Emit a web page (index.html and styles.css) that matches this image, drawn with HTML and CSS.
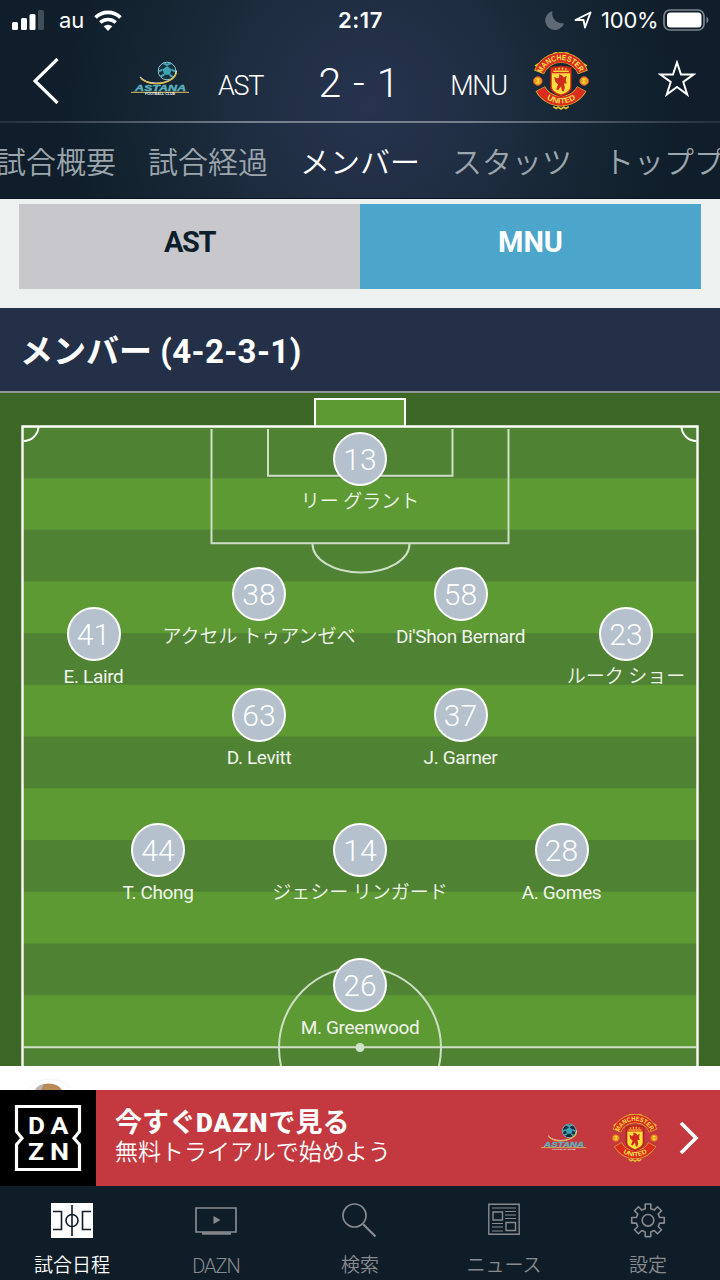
FILE: index.html
```html
<!DOCTYPE html>
<html lang="ja">
<head>
  <meta charset="UTF-8">
  <title>AST 2 - 1 MNU</title>
  <meta name="viewport" content="width=device-width, initial-scale=1.0">
  <link rel="stylesheet" href="styles.css">
</head>
<body>

  <header class="top">
    <div class="status">
      <div class="status-left">
        <svg width="32" height="20" viewBox="0 0 32 20">
          <rect x="0" y="12" width="6" height="8" rx="1.500" fill="#fff"/>
          <rect x="9" y="8" width="6" height="12" rx="1.500" fill="#fff"/>
          <rect x="17.500" y="4" width="6" height="16" rx="1.500" fill="#fff"/>
          <rect x="26" y="0" width="6" height="20" rx="1.500" fill="#414e58"/>
        </svg>
        <span class="carrier">au</span>
        <svg width="28" height="21" viewBox="0 0 28 21">
          <path d="M1.500 7.500a18 18 0 0 1 25 0" fill="none" stroke="#fff" stroke-width="3.800"/>
          <path d="M6.300 12.500a11.500 11.500 0 0 1 15.400 0" fill="none" stroke="#fff" stroke-width="3.500"/>
          <path d="M14 21l-4.300-4.700q4.300-3.300 8.600 0z" fill="#fff"/>
        </svg>
      </div>
      <div class="clock">2:17</div>
      <div class="status-right">
        <svg width="20" height="20" viewBox="0 0 20 20"><path d="M7.500 1A10 10 0 0 0 19 13.200 9.600 9.600 0 1 1 7.500 1z" fill="#606a76"/></svg>
        <svg class="loc" width="18" height="18" viewBox="0 0 18 18"><path d="M1.500 9L16.500 1.500 11 16.500 9.500 9z" fill="none" stroke="#fff" stroke-width="1.900" stroke-linejoin="round"/></svg>
        <span class="percent">100%</span>
        <svg width="46" height="22" viewBox="0 0 46 22">
          <rect x="1" y="1" width="40" height="20" rx="6" fill="none" stroke="#7d8790" stroke-width="1.700"/>
          <rect x="4" y="3.500" width="34.500" height="15" rx="3.500" fill="#fff"/>
          <path d="M43.500 7.500q4 3.500 0 7z" fill="#7d8790"/>
        </svg>
      </div>
    </div>

    <div class="match">
      <div class="back"><svg width="26" height="46" viewBox="0 0 26 46"><path d="M24.500 1L2 23l22.500 22" fill="none" stroke="#fff" stroke-width="3.200"/></svg></div>
      <div class="crest">
        <svg class="crest-ast" width="60" height="40" viewBox="0 0 60 40">
          <g id="crest-ast">
            <circle cx="36" cy="11" r="8.800" fill="#15313c" stroke="#8fc3cf" stroke-width="1"/>
            <path d="M36 6l4.500 3.400-1.700 5.300h-5.600l-1.700-5.300z" fill="#3fa3b5"/>
            <path d="M32 3l4 2 4-2M28 11.500l3.500-2M29.500 16.500l3.700-1.800M44 11.500l-3.500-2M41.500 17l-2.700-2.300" fill="none" stroke="#4ba5b5" stroke-width="2"/>
            <path d="M9 17c5 6 14 7 23 5.500 8-1.500 13-6 13.500-12" fill="none" stroke="#d9e6df" stroke-width="1.200"/>
            <path d="M10 18.500c6 5.500 14 6 22 4.500 8-2 13-6 13.500-11" fill="none" stroke="#e2b63f" stroke-width="1.300"/>
            <text x="4" y="31" class="ast-name" textLength="51" lengthAdjust="spacingAndGlyphs">ASTANA</text>
            <path d="M0 32.300h58" stroke="#e2c45a" stroke-width="1"/>
            <text x="14" y="35" class="ast-sub" textLength="30" lengthAdjust="spacingAndGlyphs">FOOTBALL CLUB</text>
          </g>
        </svg>
      </div>
      <div class="team">AST</div>
      <div class="score">2 - 1</div>
      <div class="team">MNU</div>
      <div class="crest">
        <svg width="58" height="58" viewBox="0 0 60 60">
          <g id="crest-mnu">
            <path id="mu-top" d="M10 22.300A21.400 21.400 0 0 1 50 22.300" fill="none"/>
            <path id="mu-bottom" d="M9 42.800A26.500 26.500 0 0 0 51 42.800" fill="none"/>
            <path d="M22 1.500l3-.5 2 1 3-1.500 3 1.500 2-1 3 .5M7 12l-3 2 3 2M53 12l3 2-3 2M22 56.500l3 2 2-1.500 3 2 3-2 2 1.500 3-2" fill="none" stroke="#e5c52f" stroke-width="1.700"/>
            <path d="M7.300 21.100A24.400 24.400 0 0 1 52.700 21.100" fill="none" stroke="#d8b92d" stroke-width="11"/>
            <path d="M7.700 20.300A24.400 24.400 0 0 1 52.300 20.300" fill="none" stroke="#dc2a1e" stroke-width="9.600"/>
            <path d="M8.500 38A24.500 24.500 0 0 0 51.500 38" fill="none" stroke="#d8b92d" stroke-width="11"/>
            <path d="M8.800 38.500A24.500 24.500 0 0 0 51.200 38.500" fill="none" stroke="#dc2a1e" stroke-width="9.600"/>
            <text class="mu-name"><textPath href="#mu-top" startOffset="0" textLength="50" lengthAdjust="spacingAndGlyphs">MANCHESTER</textPath></text>
            <text class="mu-name"><textPath href="#mu-bottom" startOffset="8.500" textLength="32" lengthAdjust="spacingAndGlyphs">UNITED</textPath></text>
            <circle cx="6" cy="30" r="4.500" fill="#e9a21c" stroke="#e2512a"/>
            <circle cx="54" cy="30" r="4.500" fill="#e9a21c" stroke="#e2512a"/>
            <path d="M4.500 28h3l-1.500 2 1.500 2h-3M55.500 28h-3l1.500 2-1.500 2h3" fill="none" stroke="#f8e34b"/>
            <path d="M19 16q11-3 22 0v20.500q0 6-11 9.500-11-3.500-11-9.500z" fill="#df2a1e" stroke="#8a2414"/>
            <path d="M20.500 22h19v14q0 5-9.500 8-9.500-3-9.500-8z" fill="#f8df3c"/>
            <path d="M22 20h16M24.500 18.300v-1.500M28 18.300v-2.300M31.500 18.300v-2.300M35 18.300v-1.500" stroke="#f4d23a" stroke-width="1.500"/>
            <path d="M28 23l3 1 2 2.500 3-2-1 5 1 3h-3l1 4-1 4-2 0-1-5-3 4-2-1 2-5-3-3-1-5 3 2 2-1z" fill="#d12b1d"/>
          </g>
        </svg>
      </div>
      <div class="star"><svg width="38" height="37" viewBox="0 0 38 37"><path d="M19 2.500l4 12h12.500l-10.200 7.500 3.900 12.500L19 27 8.800 34.500l3.900-12.500L2.500 14.500H15z" fill="none" stroke="#fff" stroke-width="2"/></svg></div>
    </div>

    <nav class="sections">
      <span>試合概要</span>
      <span>試合経過</span>
      <span class="on">メンバー</span>
      <span>スタッツ</span>
      <span>トッププ</span>
    </nav>
  </header>

  <div class="switch">
    <div class="switch-btn">AST</div>
    <div class="switch-btn active">MNU</div>
  </div>

  <h2 class="title">メンバー <span class="formation">(4-2-3-1)</span></h2>

  <div class="field">
    <svg class="lines" width="720" height="673" viewBox="0 393 720 673">
      <rect x="315" y="399" width="90" height="28" fill="#5d9a33" stroke="#fff" stroke-width="2"/>
      <g id="stripes">
        <rect x="22" y="426" width="676" height="640" fill="#508233"/>
        <path d="M22 504H698M22 607.300H698M22 710.700H698M22 814.200H698M22 917.700H698M22 1021.200H698" stroke="#5d9a33" stroke-width="51.700"/>
      </g>
      <path d="M22.500 1070V426.500H697.500V1070" fill="none" stroke="#fff" stroke-width="2.400"/>
      <path d="M38.500 427a15 15 0 0 1-15 14M681.500 427a15 15 0 0 0 15 14" fill="none" stroke="#fff" stroke-width="2"/>
      <g fill="none" stroke="#cfdec6" stroke-width="2">
        <path d="M211.500 429V543.300H508.500V429"/>
        <path d="M268 429V475.800H452.500V429"/>
        <path d="M312.500 544a48.500 28.500 0 0 0 97 0"/>
        <circle cx="360" cy="1048" r="81"/>
        <path d="M23 1047.300H697"/>
      </g>
      <circle cx="360" cy="1047.500" r="4.500" fill="#d3e2ca"/>
    </svg>
    <div id="players"></div>
  </div>

  <div class="list">
    <svg width="60" height="24" viewBox="0 0 60 24">
      <circle cx="30" cy="42" r="29" fill="#fff" stroke="#f3f3f3"/>
      <path d="M15 24q4-6.500 14-6.500 9 0 13 6.500z" fill="#b98a58"/>
      <path d="M15 24q2-4.500 9-6l-3 6z" fill="#b9b5b0"/>
    </svg>
  </div>

  <div class="promo">
    <div class="dazn">
      <svg width="96" height="96" viewBox="0 0 96 96">
        <path d="M16.500 16.500H79.500V41.500L74 48.200 79.500 54.500V79.500H16.500V54.500L22 48.200 16.500 41.500z" fill="none" stroke="#fff" stroke-width="3.200"/>
        <text x="28" y="43.500" class="dazn-mark" textLength="17" lengthAdjust="spacingAndGlyphs">D</text>
        <text x="50.500" y="43.500" class="dazn-mark" textLength="18" lengthAdjust="spacingAndGlyphs">A</text>
        <text x="28" y="70" class="dazn-mark" textLength="16" lengthAdjust="spacingAndGlyphs">Z</text>
        <text x="50" y="70" class="dazn-mark" textLength="19" lengthAdjust="spacingAndGlyphs">N</text>
      </svg>
    </div>
    <div class="promo-text">
      <strong>今すぐ<b>DAZN</b>で見る</strong>
      <span>無料トライアルで始めよう</span>
    </div>
    <svg class="promo-ast" width="47" height="32" viewBox="0 0 60 40"><use href="#crest-ast"/></svg>
    <svg class="promo-mnu" width="48" height="48" viewBox="0 0 60 60"><use href="#crest-mnu"/></svg>
    <svg class="arrow" width="20" height="34" viewBox="0 0 20 34"><path d="M2 2l15 15L2 32" fill="none" stroke="#fff" stroke-width="3.600"/></svg>
  </div>

  <footer class="tabs">
    <div class="tab on">
      <svg width="42" height="36" viewBox="0 0 42 36">
        <rect width="42" height="35" fill="#fff"/>
        <path d="M2 8.500h8.500v18H2M40 8.500h-8.500v18H40M21 2v31" fill="none" stroke="#0f1d29" stroke-width="1.600"/>
        <circle cx="21" cy="17.500" r="6" fill="none" stroke="#0f1d29" stroke-width="1.600"/>
      </svg>
      <span>試合日程</span>
    </div>
    <div class="tab">
      <svg width="42" height="36" viewBox="0 0 42 36">
        <path d="M1 5h40v24H1z" fill="none" stroke="#888a8e" stroke-width="1.700"/>
        <path d="M7 30.500h29" stroke="#888a8e" stroke-width="2.400"/>
        <path d="M18.500 13l7 4-7 4z" fill="#888a8e"/>
      </svg>
      <span class="latin">DAZN</span>
    </div>
    <div class="tab">
      <svg width="36" height="36" viewBox="0 0 36 36">
        <circle cx="12.500" cy="12.500" r="11.500" fill="none" stroke="#888a8e" stroke-width="1.700"/>
        <path d="M21 21L33.500 33.500" stroke="#888a8e" stroke-width="2.200"/>
      </svg>
      <span>検索</span>
    </div>
    <div class="tab">
      <svg width="32" height="36" viewBox="0 0 32 36">
        <path d="M.8 1.300h30.400v30H.8zM5 9h9.500v8H5zM18 19.500h9.500v8H18z" fill="none" stroke="#888a8e" stroke-width="1.400"/>
        <path d="M4 5h24M17 8.500h11M17 12h11M17 15.500h11M4 20.500h11M4 24h11M4 28h11" stroke="#888a8e" stroke-width="1.200"/>
      </svg>
      <span>ニュース</span>
    </div>
    <div class="tab">
      <svg width="36" height="36" viewBox="0 0 36 36">
        <g id="gear" fill="none" stroke="#888a8e" stroke-width="1.600" stroke-linejoin="round">
          <path d="M15.200 1h5.600v4.700l3.400 1.400 3.300-3.300 4 4-3.300 3.300 1.400 3.400h4.700v5.600h-4.700l-1.400 3.400 3.300 3.300-4 4-3.300-3.300-3.400 1.400v4.700h-5.600v-4.700l-3.400-1.400-3.300 3.300-4-4 3.300-3.300-1.400-3.400H1.700v-5.600h4.700l1.400-3.400-3.300-3.300 4-4 3.300 3.300 3.400-1.400z"/>
          <circle cx="18" cy="17.300" r="5.800"/>
        </g>
      </svg>
      <span>設定</span>
    </div>
  </footer>

  <script>
    // x / y = centre of the badge inside the field
    const players = [
      { no: 13, name: "リー グラント", x: 360, y: 65.500 },
      { no: 38, name: "アクセル トゥアンゼベ", x: 259, y: 200.500 },
      { no: 58, name: "Di'Shon Bernard", x: 460.500, y: 200.500 },
      { no: 41, name: "E. Laird", x: 93.500, y: 241 },
      { no: 23, name: "ルーク ショー", x: 626, y: 241 },
      { no: 63, name: "D. Levitt", x: 259, y: 322 },
      { no: 37, name: "J. Garner", x: 460.500, y: 322 },
      { no: 44, name: "T. Chong", x: 158, y: 457 },
      { no: 14, name: "ジェシー リンガード", x: 360, y: 457 },
      { no: 28, name: "A. Gomes", x: 561.500, y: 457 },
      { no: 26, name: "M. Greenwood", x: 360, y: 592 }
    ];

    document.getElementById('players').innerHTML = players.map(p => `
      <div class="player" style="left: ${p.x}px; top: ${p.y}px">
        <div class="no">${p.no}</div>
        <div class="name ${/^[A-Z]/.test(p.name) ? 'en' : ''}">${p.name}</div>
      </div>
    `).join('');
  </script>

</body>
</html>
```

FILE: styles.css
```css
* {
  box-sizing: border-box;
}

body {
  margin: 0;
  width: 720px;
  height: 1280px;
  overflow: hidden;
  display: flex;
  flex-direction: column;
  font-family: Roboto, "Noto Sans CJK JP", sans-serif;
  color: #fff;
  background: #fff;
}

svg {
  display: block;
  flex: none;
}

/* crests */
.crest-ast {
  margin: -2px 0 0 4px;
}

.ast-name {
  font: italic bold 8.500px "Liberation Sans", sans-serif;
  fill: #58b1bf;
  stroke: #58b1bf;
  stroke-width: 0.400px;
}

.ast-sub {
  font: bold 3px "Liberation Sans", sans-serif;
  fill: #e8f2f2;
}

.mu-name {
  font: bold 8px "Liberation Sans", sans-serif;
  fill: #f8e34b;
}

/* header */
.top {
  height: 199px;
  flex: none;
  background: radial-gradient(circle 310px at 370px 105px, #27334f 0%, #202e43 35%, #172735 65%, #0f1e2a 100%);
  border-bottom: 1px solid #08131d;
}

.status {
  height: 40px;
  padding: 0 11px 0 12px;
  display: flex;
  align-items: center;
  font-family: Inter, sans-serif;
  font-size: 22px;
}

.status-left,
.status-right {
  flex: 1;
  display: flex;
  align-items: center;
}

.status-left {
  gap: 11px;
}

.carrier {
  width: 28px;
  padding-left: 4px;
}

.clock {
  font-weight: 600;
  letter-spacing: 0.600px;
}

.status-right {
  justify-content: flex-end;
}

.loc {
  margin: 0 9px;
}

.percent {
  width: 58px;
  margin-right: 4px;
  letter-spacing: -0.200px;
  white-space: nowrap;
}

.match {
  height: 83px;
  display: flex;
  align-items: center;
  border-bottom: 2px solid;
  border-image: linear-gradient(90deg, #22303c, #75808c 35%, #75808c 65%, #22303c) 1;
}

.back {
  width: 110px;
  padding-left: 33px;
}

.crest {
  width: 97px;
  display: flex;
  justify-content: center;
}

.team {
  width: 67px;
  padding-top: 10px;
  text-align: center;
  font-size: 27px;
  font-weight: 300;
  letter-spacing: -1.300px;
}

.score {
  width: 171px;
  padding-top: 4px;
  text-align: center;
  font-size: 41px;
  font-weight: 350;
  letter-spacing: 1px;
}

.star {
  margin-left: auto;
  padding: 0 24px 4px 0;
}

.sections {
  height: 75px;
  padding: 0 0 2px 148px;
  display: flex;
  gap: 32px;
  align-items: center;
  white-space: nowrap;
  overflow: hidden;
  font-size: 30px;
  font-weight: 350;
  color: #9ca5ac;
}

.sections span:first-child {
  margin-left: -152px;
}

.sections .on {
  color: #fff;
}

/* team switch */
.switch {
  height: 109px;
  flex: none;
  padding: 5px 19px 19px;
  display: flex;
  background: #edf1f0;
}

.switch-btn {
  flex: 1;
  background: #c8c7cc;
  color: #0d1f2b;
  text-align: center;
  line-height: 76px;
  font-size: 29px;
  font-weight: 700;
  letter-spacing: -1.500px;
}

.switch-btn.active {
  background: #4ca5cb;
  color: #fff;
  letter-spacing: 0;
}

.title {
  height: 85px;
  flex: none;
  margin: 0;
  padding: 1px 0 0 20px;
  background: #233048;
  border-bottom: 2px solid #8c9696;
  font-size: 33px;
  line-height: 86px;
}

.formation {
  letter-spacing: 0.400px;
}

/* pitch */
.field {
  position: relative;
  height: 673px;
  flex: none;
  background: #3d6726;
}

.player {
  position: absolute;
  width: 240px;
  margin: -27px 0 0 -120px;
  display: flex;
  flex-direction: column;
  align-items: center;
}

.no {
  width: 54px;
  height: 54px;
  border: 2px solid #fff;
  border-radius: 50%;
  background: #b5c1cc;
  text-align: center;
  font-size: 30px;
  font-weight: 350;
  line-height: 52px;
}

.name {
  padding-top: 2px;
  font-size: 19px;
  font-weight: 350;
  line-height: 28px;
  color: #f0f5ec;
  white-space: nowrap;
}

.name.en {
  font-weight: 400;
  letter-spacing: -0.350px;
}

.list {
  height: 24px;
  flex: none;
  padding-left: 20px;
  overflow: hidden;
}

/* promo banner */
.promo {
  height: 96px;
  flex: none;
  display: flex;
  align-items: center;
  background: #c4393f;
}

.dazn {
  background: #000;
}

.dazn-mark {
  font: bold 24px Roboto, sans-serif;
  fill: #fff;
}

.promo-text {
  flex: 1;
  padding: 0 0 2px 19px;
  display: flex;
  flex-direction: column;
  white-space: nowrap;
}

.promo-text strong {
  font-size: 27px;
  line-height: 30px;
}

.promo-text b {
  font-size: 26px;
  letter-spacing: 1px;
}

.promo-text span {
  font-size: 23px;
  line-height: 29px;
  font-weight: 350;
}

.promo-ast {
  margin-right: 23px;
}

.promo-mnu {
  margin-right: 20px;
}

.arrow {
  margin-right: 21px;
}

/* bottom tabs */
.tabs {
  height: 94px;
  flex: none;
  display: flex;
  background: #0f1d29;
}

.tab {
  flex: 1;
  padding-top: 17px;
  display: flex;
  flex-direction: column;
  align-items: center;
  gap: 13px;
  font-size: 19px;
  font-weight: 350;
  line-height: 28px;
  color: #888a8e;
}

.tab.on {
  color: #fff;
}

.latin {
  font-size: 20px;
  font-weight: 350;
  letter-spacing: -1px;
}
```
